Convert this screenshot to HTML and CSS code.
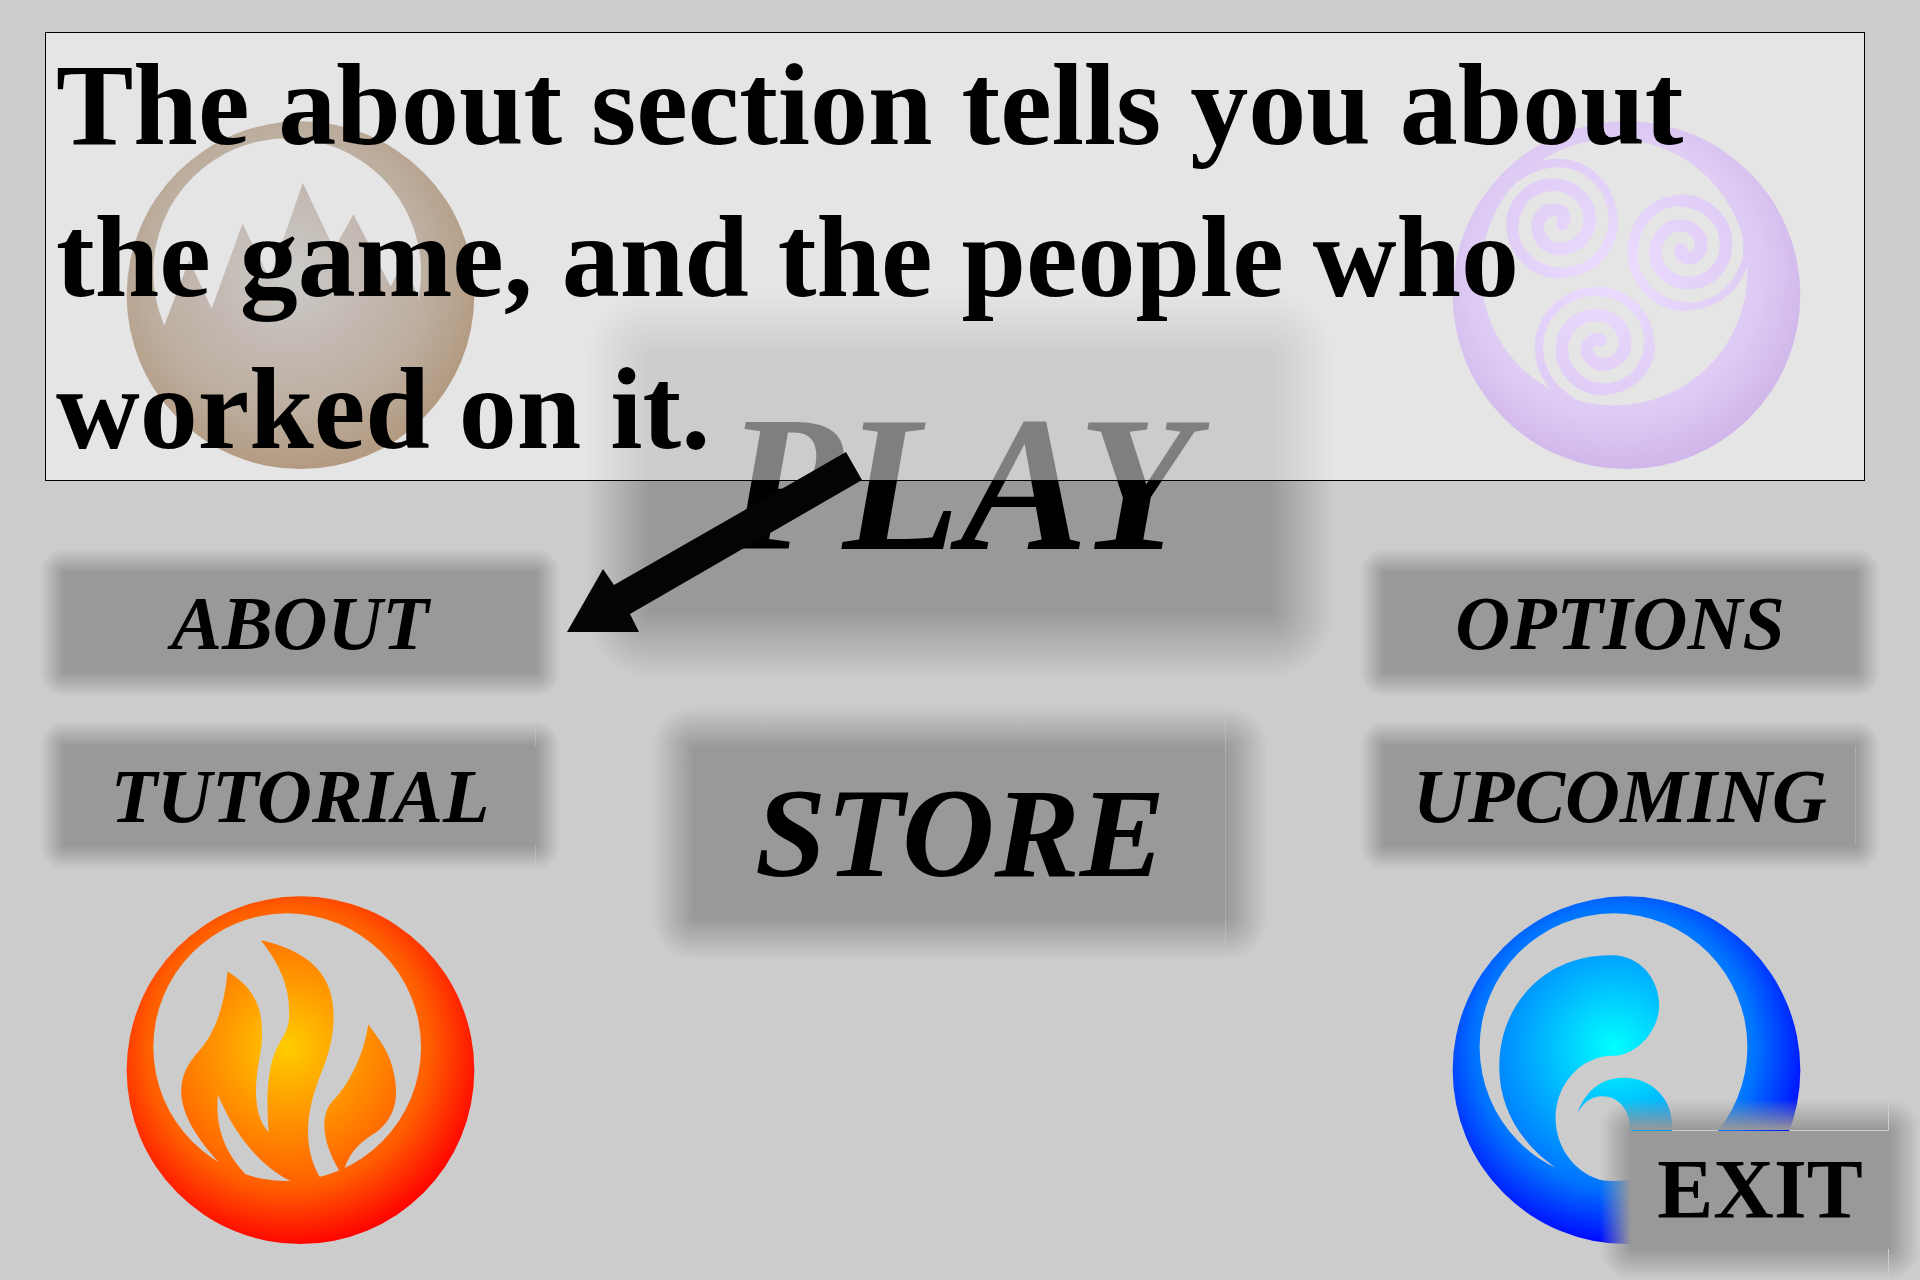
FILE: index.html
```html
<!DOCTYPE html>
<html lang="en">
<head>
<meta charset="utf-8">
<title>Main menu</title>
<link rel="stylesheet" href="styles.css">
</head>
<body>
<main class="menu">
  <div class="column column-left">
    <svg class="element" viewBox="78 64 1048 1048" role="img" aria-label="Earth">
      <defs>
        <radialGradient id="earth" gradientUnits="userSpaceOnUse" cx="565" cy="519" r="604">
          <stop offset="0" stop-color="#989894"/><stop offset=".35" stop-color="#8a776b"/><stop offset=".7" stop-color="#7b5e40"/><stop offset="1" stop-color="#663300"/>
        </radialGradient>
        <mask id="earth-cut" maskUnits="userSpaceOnUse" x="78" y="64" width="1048" height="1048">
          <rect x="78" y="64" width="1048" height="1048" fill="#fff"/>
          <circle cx="562" cy="518" r="402" fill="#000"/>
          <path fill="#fff" d="M193 677L268 482L335 627L428 372L509 537L609 250L703 448L761 344L873 562L909 484L955 590L1020 1000H193Z"/>
        </mask>
      </defs>
      <circle cx="602" cy="587" r="522" fill="url(#earth)" mask="url(#earth-cut)"/>
    </svg>
    <button class="plate plate-small" type="button">ABOUT</button>
    <button class="plate plate-small seam-edge" type="button">TUTORIAL</button>
    <svg class="element element-low" viewBox="78 51 1048 1048" role="img" aria-label="Fire">
      <defs>
        <radialGradient id="fire" gradientUnits="userSpaceOnUse" cx="565" cy="505" r="604">
          <stop offset="0" stop-color="#ffcc00"/><stop offset=".7" stop-color="#ff5e00"/><stop offset="1" stop-color="#ff0000"/>
        </radialGradient>
        <mask id="fire-cut" maskUnits="userSpaceOnUse" x="78" y="51" width="1048" height="1048">
          <rect x="78" y="51" width="1048" height="1048" fill="#fff"/>
          <circle cx="562" cy="505" r="402" fill="#000"/>
          <path fill="#fff" d="M383 278C375 370 348 462 298 515C220 600 215 695 358 852L390 960L436 886C375 820 345 745 354 648C405 770 480 860 572 907L610 960L660 895C605 800 620 690 665 580C705 485 710 400 690 335C665 255 590 208 483 184C555 275 569 345 568 405C567 500 504 470 503 680Q503 730 507 760C460 715 465 620 475 560C484 510 487 500 486 450C486 370 445 315 383 278Z"/>
          <path fill="#fff" d="M805 437C795 520 750 615 700 665C660 705 665 785 718 875L727 930L735 867C757 805 800 780 830 760C895 710 898 640 878 565C865 515 835 475 805 437Z"/>
        </mask>
      </defs>
      <circle cx="602" cy="574" r="522" fill="url(#fire)" mask="url(#fire-cut)"/>
    </svg>
  </div>

  <div class="column column-center">
    <button class="plate plate-play" type="button">PLAY</button>
    <button class="plate plate-store seam-core seam-edge" type="button">STORE</button>
  </div>

  <div class="column column-right">
    <svg class="element" viewBox="66 64 1048 1048" role="img" aria-label="Air">
      <defs>
        <radialGradient id="air" gradientUnits="userSpaceOnUse" cx="555" cy="519" r="604">
          <stop offset="0" stop-color="#d9bbff"/><stop offset=".7" stop-color="#be98eb"/><stop offset="1" stop-color="#a06cd4"/>
        </radialGradient>
        <mask id="air-cut" maskUnits="userSpaceOnUse" x="66" y="64" width="1048" height="1048">
          <rect x="66" y="64" width="1048" height="1048" fill="#fff"/>
          <circle cx="553" cy="518" r="400" fill="#000"/>
          <g fill="none" stroke="#fff" stroke-width="38">
            <path stroke-linecap="round" d="M398 373Q415 331 370 331A47 51 0 0 0 323 382A67 66 0 0 0 390 448A90 88 0 0 0 480 360A110 105 0 0 0 370 255A123 125 0 0 0 247 380"/>
            <path stroke-width="34" d="M247 380A145 140 0 0 0 392 520"/>
            <path stroke-width="30" d="M392 520A158 155 0 0 0 550 365"/>
            <path stroke-width="26" d="M550 365A165 175 0 0 0 385 190Q300 190 225 262"/>
            <path stroke-linecap="round" d="M752 450Q756 476 778 476A36 43 0 0 0 814 433A64 56 0 0 0 750 377A73 83 0 0 0 677 460A101 91 0 0 0 778 551A111 118 0 0 0 889 433A137 130 0 0 0 752 303"/>
            <path stroke-width="32" d="M752 303A144 155 0 0 0 608 458"/>
            <path stroke-width="28" d="M608 458A170 164 0 0 0 778 622"/>
            <path stroke-width="22" d="M778 622Q915 610 951 470L950 410"/>
            <path stroke-linecap="round" d="M512 722Q508 720 500 720A28 30 0 0 0 472 750A48 45 0 0 0 520 795A66 65 0 0 0 586 730A86 84 0 0 0 500 646A104 102 0 0 0 396 748A124 121 0 0 0 520 869"/>
            <path stroke-width="34" d="M520 869A139 134 0 0 0 659 735"/>
            <path stroke-width="29" d="M659 735A159 159 0 0 0 500 576"/>
            <path stroke-width="25" d="M500 576A173 169 0 0 0 327 745Q330 850 430 908"/>
          </g>
        </mask>
      </defs>
      <circle cx="590" cy="587" r="522" fill="url(#air)" mask="url(#air-cut)"/>
    </svg>
    <button class="plate plate-small" type="button">OPTIONS</button>
    <button class="plate plate-small seam-core" type="button">UPCOMING</button>
    <svg class="element element-low" viewBox="96 51 1048 1048" role="img" aria-label="Water">
      <defs>
        <radialGradient id="water" gradientUnits="userSpaceOnUse" cx="585" cy="505" r="604">
          <stop offset="0" stop-color="#00ffff"/><stop offset=".7" stop-color="#0072ff"/><stop offset="1" stop-color="#0000ff"/>
        </radialGradient>
        <mask id="water-cut" maskUnits="userSpaceOnUse" x="96" y="51" width="1048" height="1048">
          <rect x="96" y="51" width="1048" height="1048" fill="#fff"/>
          <circle cx="581" cy="505" r="402" fill="#000"/>
          <path fill="#fff" d="M410 869C295 790 238 680 238 565C238 370 380 229 570 229C660 226 718 300 718 380C718 455 650 531 580 531C480 531 407 620 407 718C407 810 470 890 555 907L500 1000Z"/>
          <path fill="#fff" d="M473 702C500 630 550 597 612 597C695 597 757 660 757 740V800H640L630 740C626 690 595 652 548 652C515 652 490 670 473 702Z"/>
        </mask>
      </defs>
      <circle cx="620" cy="574" r="522" fill="url(#water)" mask="url(#water-cut)"/>
    </svg>
  </div>
</main>

<button class="plate plate-exit" type="button">EXIT</button>

<section class="hint">
  <p class="hint-text">The about section tells you about the game, and the people who worked on it.</p>
</section>
<svg class="pointer" viewBox="0 0 295 180" aria-hidden="true">
  <path fill="#040404" d="M0 180L36 117L47 133L279 0L295 28L63 162L72 180Z"/>
</svg>
</body>
</html>
```
FILE: styles.css
```css
* {
  box-sizing: border-box;
}

body {
  margin: 0;
  background: #cccccc;
  color: #000000;
  font-family: "Liberation Serif", serif;
}

.menu {
  display: grid;
  grid-template-columns: 13fr 20fr 13fr;
  min-height: 100vh;
  padding: 0 40px;
}

.column {
  display: flex;
  flex-direction: column;
}

.column-left,
.column-right {
  padding-top: 121px;
  gap: 24px;
}

.column-center {
  align-items: center;
  padding-top: 291px;
  gap: 28px;
}

/* element emblems */
.element {
  width: 349px;
  height: 349px;
  margin-bottom: 54px;
}

.element-low {
  margin: 2px 0 0;
}

.column-left .element {
  margin-left: 86px;
}

.column-right .element {
  align-self: flex-end;
  margin-right: 79px;
}

/* grey plate with edges that fade out; --fx and --fy are the fade depths */
.plate {
  --fx: 24px;
  --fy: 25px;
  --solid: #999999;
  --clear: #99999900;
  --gap: 0px;
  --core-line: transparent;
  --edge-line: transparent;
  display: flex;
  align-items: center;
  justify-content: center;
  padding: 0;
  border: 0;
  color: #000000;
  font-family: "Liberation Serif", serif;
  font-weight: bold;
  line-height: 1;
  cursor: pointer;
  background:
    linear-gradient(var(--core-line), var(--core-line)) right var(--fx) top 50% / 1px calc(100% - 2 * var(--fy)),
    linear-gradient(var(--edge-line), var(--edge-line)) right var(--fx) top 0 / 1px var(--fy),
    linear-gradient(var(--edge-line), var(--edge-line)) right var(--fx) bottom 0 / 1px var(--fy),
    linear-gradient(var(--solid), var(--solid)) left var(--fx) bottom var(--fy) / calc(100% - 2 * var(--fx)) calc(100% - 2 * var(--fy) - var(--gap)),
    linear-gradient(to top, var(--solid), var(--clear)) left var(--fx) top 0 / calc(100% - 2 * var(--fx) - var(--gap)) var(--fy),
    linear-gradient(to bottom, var(--solid), var(--clear)) left var(--fx) bottom 0 / calc(100% - 2 * var(--fx) - var(--gap)) var(--fy),
    linear-gradient(to left, var(--solid), var(--clear)) left 0 top 50% / var(--fx) calc(100% - 2 * var(--fy)),
    linear-gradient(to right, var(--solid), var(--clear)) right 0 top 50% / var(--fx) calc(100% - 2 * var(--fy)),
    radial-gradient(farthest-side at 100% 100%, var(--solid), var(--clear)) left 0 top 0 / var(--fx) var(--fy),
    radial-gradient(farthest-side at 0 100%, var(--solid), var(--clear)) right 0 top 0 / var(--fx) var(--fy),
    radial-gradient(farthest-side at 100% 0, var(--solid), var(--clear)) left 0 bottom 0 / var(--fx) var(--fy),
    radial-gradient(farthest-side at 0 0, var(--solid), var(--clear)) right 0 bottom 0 / var(--fx) var(--fy);
  background-repeat: no-repeat;
}

.plate-small,
.plate-play,
.plate-store {
  font-family: "Edwardian Script ITC", "Liberation Serif", serif;
  font-style: italic;
}

.plate-small {
  height: 149px;
  font-size: 76px;
}

.plate-play {
  --fx: 66px;
  --fy: 67px;
  width: 750px;
  max-width: 100%;
  height: 387px;
  font-size: 192px;
}

.plate-store {
  --fx: 42px;
  --fy: 42px;
  width: 616px;
  max-width: 100%;
  height: 254px;
  font-size: 128px;
}

.plate-exit {
  --fx: 31px;
  --fy: 31px;
  --gap: 1px;
  position: absolute;
  right: 0;
  bottom: 0;
  width: 320px;
  height: 181px;
  font-size: 84px;
}

.seam-core {
  --core-line: #adadad;
}

.seam-edge {
  --edge-line: #cccccc66;
}

/* tutorial message over the menu */
.hint {
  position: absolute;
  top: 32px;
  left: 45px;
  right: 55px;
  display: flex;
  align-items: center;
  height: 449px;
  padding: 0 10px;
  border: 1px solid #000000;
  background: #ffffff7f;
}

.hint-text {
  margin: 0;
  font-size: 116px;
  font-weight: bold;
  line-height: 152px;
}

.pointer {
  position: absolute;
  top: 452px;
  left: 567px;
  width: 295px;
  height: 180px;
}
```
